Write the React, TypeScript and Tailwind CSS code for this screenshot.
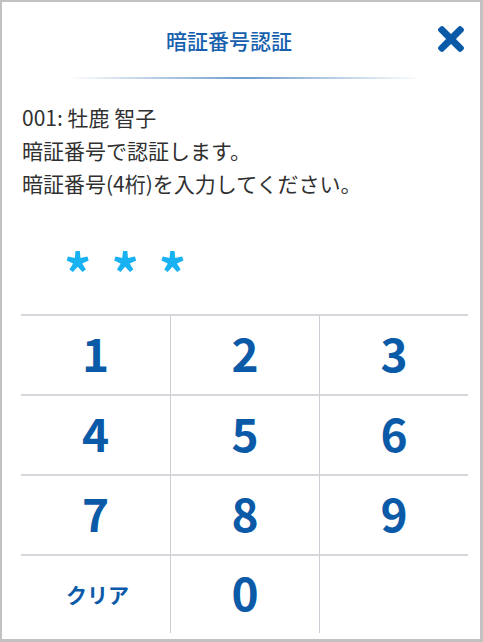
import React from "react";

const FONT = '"Noto Sans CJK JP", "Noto Sans", sans-serif';

function CloseIcon() {
  return (
    <svg viewBox="0 80 352 352" className="w-[26px] h-[26px]" fill="#0b5aa8" aria-hidden>
      <path d="M242.72 256l100.07-100.07c12.28-12.28 12.28-32.19 0-44.48l-22.24-22.24c-12.28-12.28-32.19-12.28-44.480 0L176 189.28 75.930 89.210c-12.28-12.28-32.19-12.28-44.48 0L9.21 111.45c-12.28 12.28-12.28 32.19 0 44.48L109.28 256 9.21 356.07c-12.28 12.28-12.28 32.19 0 44.48l22.24 22.24c12.28 12.28 32.2 12.28 44.48 0L176 322.72l100.07 100.07c12.28 12.28 32.2 12.28 44.48 0l22.24-22.24c12.28-12.28 12.28-32.19 0-44.48L242.72 256z" />
    </svg>
  );
}

const keys = ["1", "2", "3", "4", "5", "6", "7", "8", "9", "クリア", "0", ""];

export default function App() {
  return (
    <div
      className="w-[483px] h-[642px] bg-white border-[#c2c2c2] border-l-2 border-t-2 border-r-[3px] border-b-[3px] flex flex-col"
      style={{ fontFamily: FONT }}
    >
      <div className="relative h-[75px] flex items-center justify-center pr-[24px]">
        <span className="text-[21px] leading-[30px] text-[#1660ae] font-medium">暗証番号認証</span>
        <button className="absolute right-[16px] top-[24px] flex">
          <CloseIcon />
        </button>
      </div>
      <div className="ml-[65px] mr-[57px] h-[2px] bg-linear-to-r from-transparent via-[#6f9dcc] to-transparent" />

      <div className="mt-[22px] pl-[20px] text-[21px] leading-[33px] text-[#303030]">
        <p>001: 牡鹿 智子</p>
        <p>暗証番号で認証します。</p>
        <p>暗証番号(4桁)を入力してください。</p>
      </div>

      <div className="h-[114px] pt-[30px] pl-[62px] flex items-center gap-[20px] text-[54px] font-bold text-[#18b2f2] leading-none">
        <span>*</span>
        <span>*</span>
        <span>*</span>
      </div>

      <div className="ml-[19px] mr-[12px] grid grid-cols-3">
        {keys.map((k, i) => (
          <div
            key={i}
            className={
              "flex items-center justify-center border-t-2 border-[#d6d6dd] font-bold text-[#0b5aa8] " +
              (i >= 9 ? "h-[79px] " : "h-[80px] ") +
              (i % 3 !== 0 ? "border-l border-l-[#cdcdd5] " : "") +
              (k.length > 1 ? "text-[21px] pl-[4px]" : "text-[46px] pb-[6px]")
            }
          >
            {k}
          </div>
        ))}
      </div>
    </div>
  );
}
